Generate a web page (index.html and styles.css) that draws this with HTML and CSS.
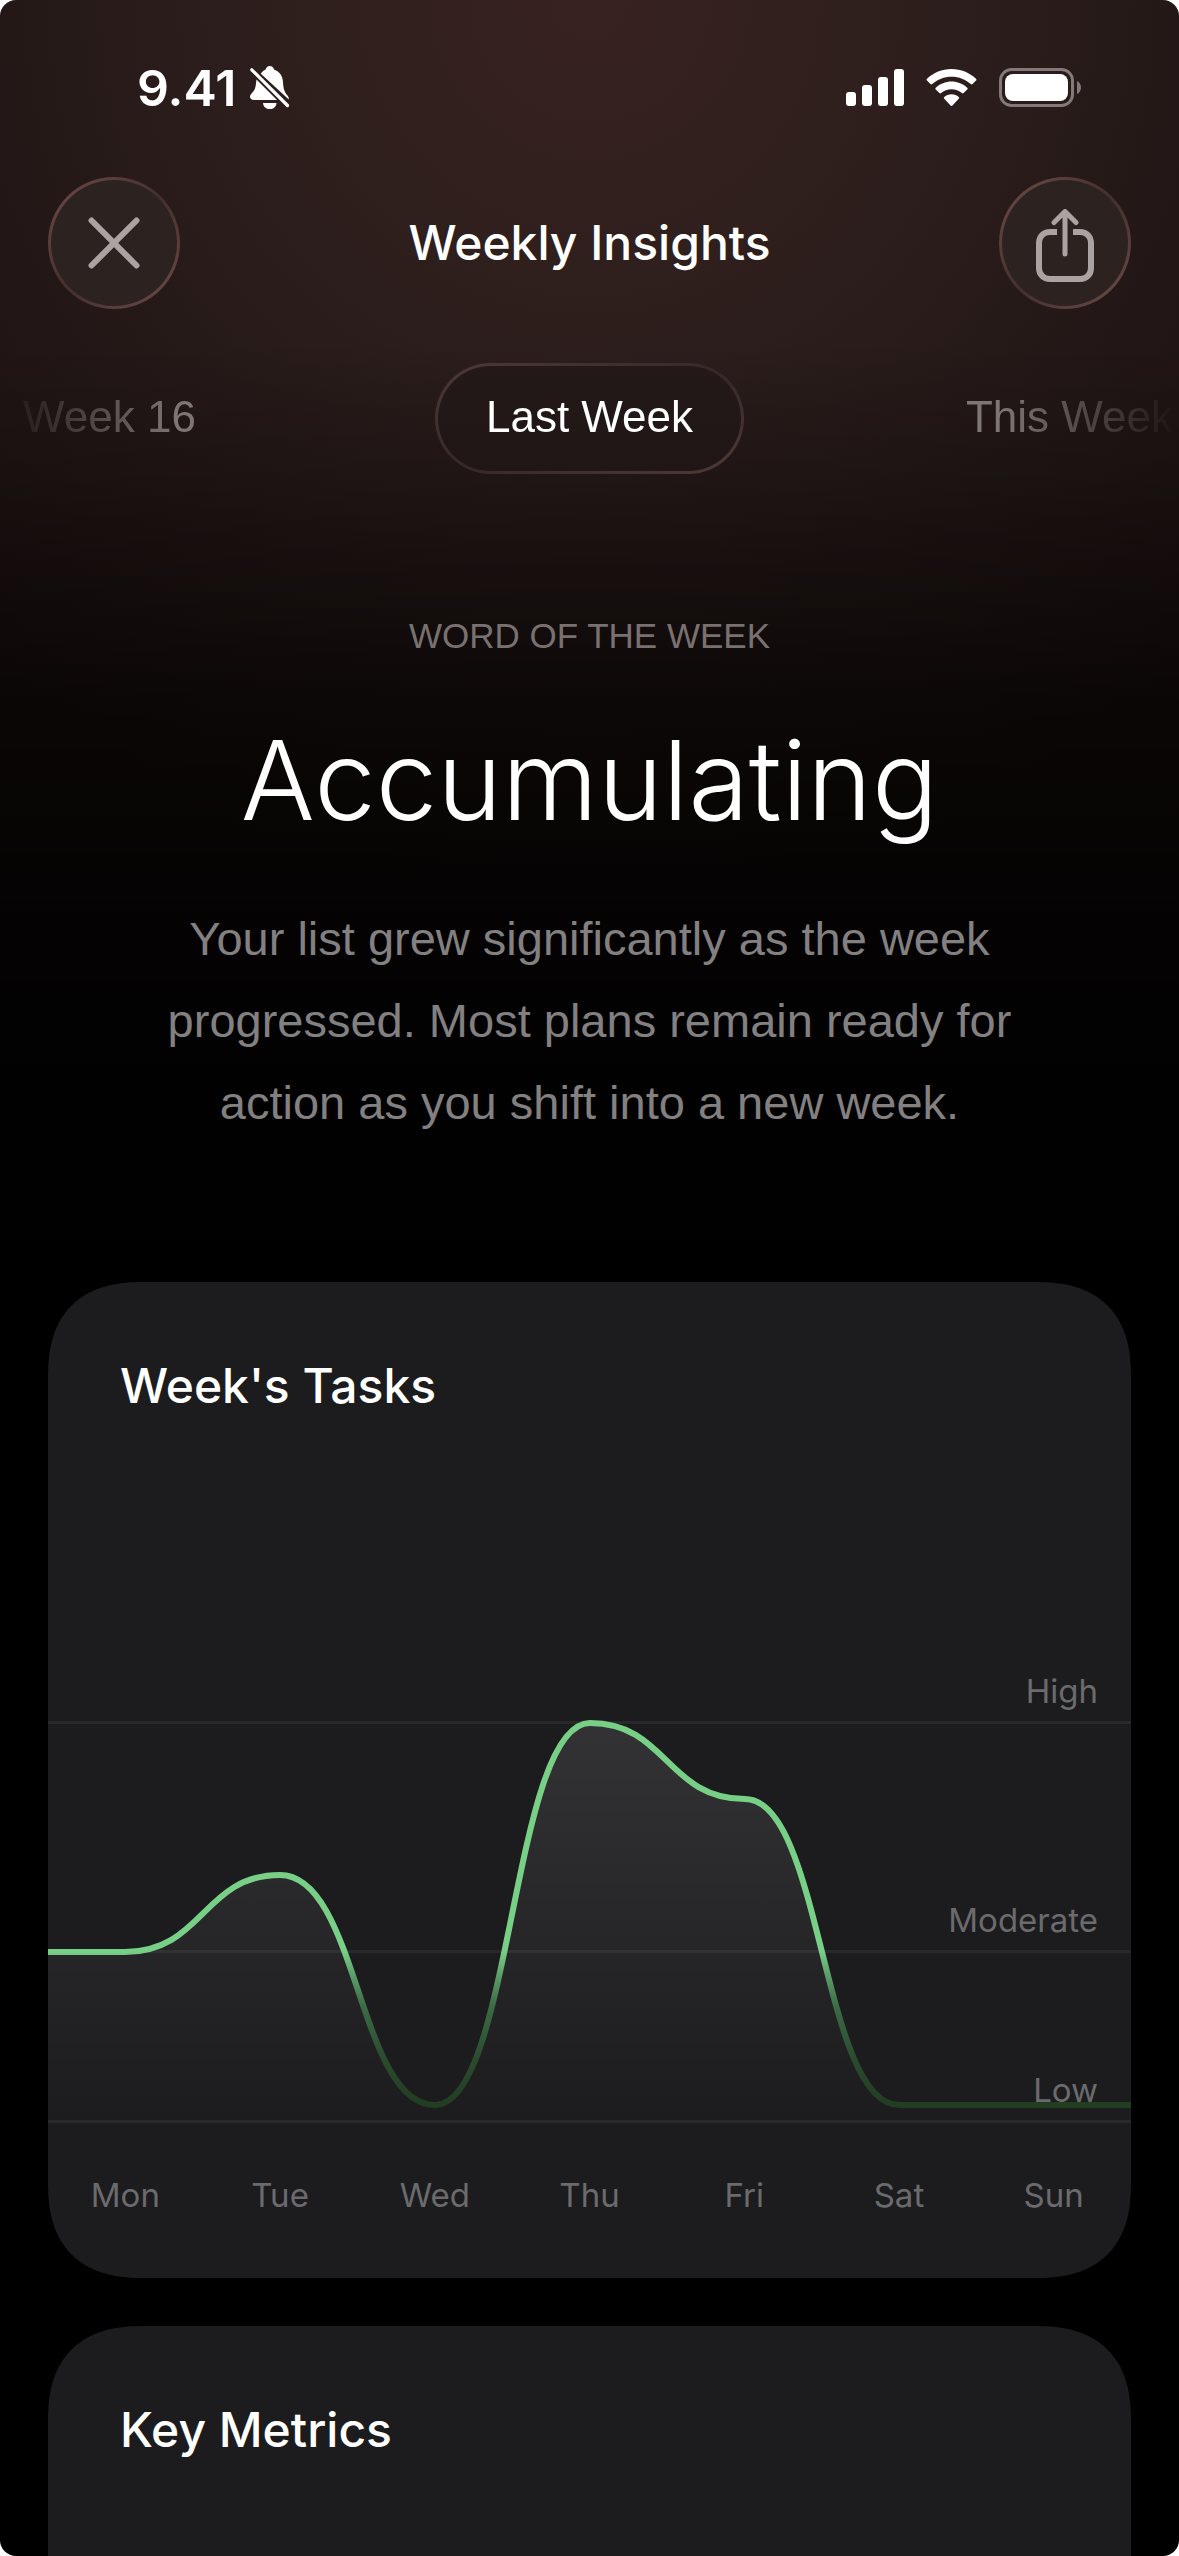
FILE: index.html
```html
<!DOCTYPE html>
<html lang="en">
<head>
  <meta charset="UTF-8">
  <meta name="viewport" content="width=device-width, initial-scale=1.0">
  <title>Weekly Insights</title>
  <link rel="stylesheet" href="styles.css">
</head>
<body>
  <div class="screen">
    <div class="status-bar">
      <div class="status-left">
        <span class="time">9.41</span>
        <svg class="bell" width="40" height="44" viewBox="0 0 40 44">
          <path fill="#fff" d="M10.8 7.8C12.2 5.5 14 4.2 15.6 3.5C16.2 1.2 17.6 0 19.8 0C22 0 23.5 1.2 24 3.5C30 5.800 32.500 10 33 16C33.400 23 34.500 26 37.500 29.500C38.500 31 39 32 38.800 33.500Z"/>
          <path fill="#fff" d="M6.500 13.500L27 34H4C1.500 34 0 32.700 0 30.800C0 28 3.500 26.500 5 22.500C6 19.500 6 16.500 6.500 13.500Z"/>
          <path fill="#fff" d="M13 37H26.500C26 41 23.500 43 19.800 43C16 43 13.500 41 13 37Z"/>
          <path stroke="#fff" stroke-width="3.200" stroke-linecap="round" d="M1.800 3.800L37.500 39.500"/>
        </svg>
      </div>
      <div class="status-right">
        <svg width="58" height="38" viewBox="0 0 58 38" fill="#fff">
          <rect x="0" y="23" width="10" height="14" rx="3"/>
          <rect x="16" y="16" width="10" height="21" rx="3"/>
          <rect x="32" y="8" width="10" height="29" rx="3"/>
          <rect x="48" y="0" width="10" height="37" rx="3"/>
        </svg>
        <svg width="51" height="38" viewBox="0 0 51 38" fill="#fff">
          <path d="M25.500 0C35 0 43.500 3.700 50 9.700C50.600 10.300 50.600 11 50 11.600L46.500 15.100C46 15.600 45.300 15.600 44.800 15.100C39.500 10.300 33 7.700 25.500 7.700C18 7.700 11.500 10.300 6.200 15.100C5.700 15.600 5 15.600 4.500 15.100L1 11.600C.4 11 .4 10.300 1 9.700C7.500 3.700 16 0 25.500 0Z"/>
          <path d="M25.500 12.600C31.500 12.600 37 14.900 41.200 18.700C41.800 19.300 41.800 20 41.200 20.600L37.600 24.100C37.100 24.600 36.500 24.600 35.900 24.100C33.100 21.700 29.500 20.300 25.500 20.300C21.500 20.300 17.900 21.700 15.100 24.100C14.500 24.600 13.900 24.600 13.400 24.100L9.800 20.600C9.200 20 9.200 19.300 9.800 18.700C14 14.900 19.500 12.600 25.500 12.600Z"/>
          <path d="M25.500 25.200C28.300 25.200 30.800 26.200 32.700 27.900C33.300 28.500 33.300 29.100 32.700 29.700L26.500 36.500C25.900 37.100 25.100 37.100 24.500 36.500L18.300 29.700C17.700 29.100 17.700 28.500 18.300 27.900C20.200 26.200 22.700 25.200 25.500 25.200Z"/>
        </svg>
        <svg width="82" height="39" viewBox="0 0 82 39">
          <rect x="1.500" y="1.500" width="72" height="36" rx="11" fill="none" stroke="#837978" stroke-width="3"/>
          <rect x="6" y="6" width="63" height="27" rx="8" fill="#fff"/>
          <path fill="#837978" d="M78 13C80.500 14.200 82 16.600 82 19.500C82 22.400 80.500 24.800 78 26Z"/>
        </svg>
      </div>
    </div>

    <header class="header">
      <button class="icon-button" type="button" aria-label="Close">
        <svg width="52" height="52" viewBox="0 0 52 52" fill="none" stroke="#aaa3a2" stroke-width="6" stroke-linecap="round">
          <path d="M3.500 3.500L48.500 48.500M48.500 3.500L3.500 48.500"/>
        </svg>
      </button>
      <h1 class="title">Weekly Insights</h1>
      <button class="icon-button" type="button" aria-label="Share">
        <svg class="share-icon" width="58" height="74" viewBox="0 0 58 74" fill="none" stroke="#aaa3a2">
          <path stroke-width="6" d="M21 23H14C7.500 23 3 27.500 3 34V59C3 65.500 7.500 70 14 70H44C50.500 70 55 65.500 55 59V34C55 27.500 50.500 23 44 23H37"/>
          <path stroke-width="5" stroke-linecap="round" stroke-linejoin="round" d="M29 45V3M18 13.500L29 2.500L40 13.500"/>
        </svg>
      </button>
    </header>

    <nav class="weeks">
      <a class="week" href="#week-16">Week 16</a>
      <a class="week active" href="#last-week">Last Week</a>
      <a class="week" href="#this-week">This Week</a>
    </nav>

    <section class="word">
      <p class="word-label">WORD OF THE WEEK</p>
      <h2 class="word-title">Accumulating</h2>
      <p class="word-text">Your list grew significantly as the week progressed. Most plans remain ready for action as you shift into a new week.</p>
    </section>

    <main class="cards">
      <section class="card">
        <h3 class="card-title">Week's Tasks</h3>
        <div class="chart">
          <div class="level level-high">High</div>
          <div class="level level-moderate">Moderate</div>
          <div class="level level-low">Low</div>
          <svg class="curve" viewBox="0 0 1083 483" preserveAspectRatio="none" fill="none">
            <defs>
              <linearGradient id="line" gradientUnits="userSpaceOnUse" x1="0" y1="311" x2="0" y2="465">
                <stop offset="0" stop-color="#78d087"/>
                <stop offset="0.160" stop-color="#5c9d69"/>
                <stop offset="0.360" stop-color="#3c6b46"/>
                <stop offset="0.700" stop-color="#2b4b2f"/>
                <stop offset="1" stop-color="#213d22"/>
              </linearGradient>
              <linearGradient id="area" gradientUnits="userSpaceOnUse" x1="0" y1="82" x2="0" y2="483">
                <stop offset="0" stop-color="#fff" stop-opacity="0.100"/>
                <stop offset="1" stop-color="#fff" stop-opacity="0"/>
              </linearGradient>
            </defs>
            <path fill="url(#area)" d="M0 312H77C155 312 155 235 232 235C310 235 310 465 387 465C464 465 464 83 542 83C619 83 619 159 697 159C774 159 774 465 851 465H1083V483H0Z"/>
            <path stroke="url(#line)" stroke-width="6" d="M0 312H77C155 312 155 235 232 235C310 235 310 465 387 465C464 465 464 83 542 83C619 83 619 159 697 159C774 159 774 465 851 465H1083"/>
          </svg>
        </div>
        <div class="days">
          <span>Mon</span>
          <span>Tue</span>
          <span>Wed</span>
          <span>Thu</span>
          <span>Fri</span>
          <span>Sat</span>
          <span>Sun</span>
        </div>
      </section>

      <section class="card">
        <h3 class="card-title">Key Metrics</h3>
      </section>
    </main>
  </div>
</body>
</html>
```
FILE: styles.css
```css
* {
  box-sizing: border-box;
}

body {
  margin: 0;
  background: #fff;
  color: #fff;
  font-family: Inter, sans-serif;
}

h1, h2, h3, p {
  margin: 0;
}

.screen {
  display: flex;
  flex-direction: column;
  height: 100vh;
  overflow: hidden;
  border-radius: 16px;
  background:
    linear-gradient(to bottom, transparent 340px, rgba(0, 0, 0, 0.2) 480px, rgba(0, 0, 0, 0.6) 700px, rgba(0, 0, 0, 0.84) 900px, #000 1260px),
    radial-gradient(ellipse 900px 900px at 50% 0, #382221 0, #2c1e1c 40%, #221716 70%, #1c1010 100%);
}

/* status bar */
.status-bar {
  display: flex;
  justify-content: space-between;
  align-items: center;
  flex-shrink: 0;
  height: 177px;
  padding: 0 98px 2px 137px;
}

.status-left {
  display: flex;
  align-items: center;
  gap: 14px;
}

.time {
  font-size: 50px;
  font-weight: 600;
  line-height: 60px;
}

.status-right {
  display: flex;
  align-items: center;
  gap: 22px;
}

/* header */
.header {
  display: flex;
  justify-content: space-between;
  align-items: center;
  padding: 0 48px;
}

.title {
  font-size: 48px;
  font-weight: 500;
  line-height: 60px;
}

.icon-button {
  display: flex;
  justify-content: center;
  align-items: center;
  width: 132px;
  height: 132px;
  padding: 0;
  border: 3px solid transparent;
  border-radius: 50%;
  background:
    linear-gradient(#2c2220, #2c2220) padding-box,
    linear-gradient(135deg, #6e4c49, #432f2d 50%, #6e4c49) border-box;
  cursor: pointer;
}

.share-icon {
  margin-bottom: -6px;
}

/* week switcher */
.weeks {
  display: grid;
  grid-template-columns: repeat(3, 480px);
  justify-content: center;
  justify-items: center;
  flex-shrink: 0;
  margin-top: 54px;
  -webkit-mask-image: linear-gradient(to right, transparent, #000 15%, #000 85%, transparent);
  mask-image: linear-gradient(to right, transparent, #000 15%, #000 85%, transparent);
}

.week {
  padding: 0 48px 3px;
  border: 3px solid transparent;
  border-radius: 56px;
  color: #7d7675;
  font-family: "Liberation Sans", Arial, sans-serif;
  font-size: 44px;
  line-height: 102px;
  text-decoration: none;
  white-space: nowrap;
}

.week.active {
  background:
    linear-gradient(#231918, #201615) padding-box,
    linear-gradient(160deg, #4f3936, #35282a 50%, #4f3936) border-box;
  color: #fff;
}

/* word of the week */
.word {
  padding: 132px 140px 0;
  text-align: center;
}

.word-label {
  color: #797170;
  font-family: "Liberation Sans", Arial, sans-serif;
  font-size: 35px;
  line-height: 60px;
}

.word-title {
  margin-top: 48px;
  font-size: 110px;
  font-weight: 300;
  line-height: 132px;
}

.word-text {
  margin-top: 52px;
  color: #828080;
  font-family: "Liberation Sans", Arial, sans-serif;
  font-size: 47px;
  line-height: 82px;
}

/* cards */
.cards {
  display: flex;
  flex-direction: column;
  gap: 48px;
  padding: 138px 48px 0;
}

.card {
  overflow: hidden;
  min-height: 480px;
  padding-bottom: 59px;
  border-radius: 80px;
  background: #1c1c1e;
}

@supports (corner-shape: superellipse(1.3)) {
  .card {
    border-radius: 96px;
    corner-shape: superellipse(1.3);
  }
}

.card-title {
  padding: 72px 72px 0;
  font-size: 48px;
  font-weight: 500;
  line-height: 64px;
}

.chart {
  position: relative;
  margin-top: 222px;
}

.curve {
  position: absolute;
  top: 0;
  left: 0;
  width: 100%;
  height: 100%;
}

.level {
  display: flex;
  justify-content: flex-end;
  align-items: flex-end;
  padding: 0 33px 10px;
  border-bottom: 3px solid #29292b;
  color: #6b6b6d;
  font-size: 33px;
  line-height: 40px;
}

.level-high {
  height: 84px;
}

.level-moderate {
  height: 229px;
}

.level-low {
  height: 170px;
}

.days {
  display: grid;
  grid-template-columns: repeat(7, 1fr);
  margin-top: 48px;
  color: #6b6b6d;
  font-size: 33px;
  line-height: 48px;
  text-align: center;
}
```
